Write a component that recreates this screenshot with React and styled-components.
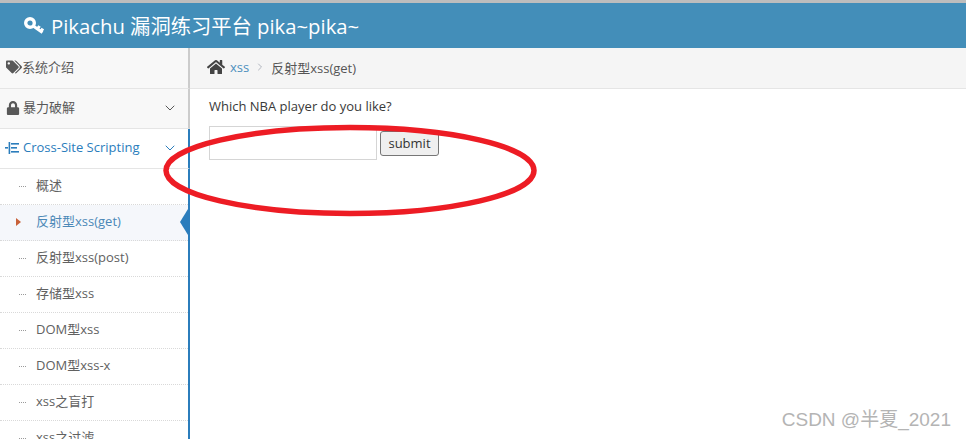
import React from "react";
import styled, { createGlobalStyle } from "styled-components";
import { FaTags, FaLock, FaHome } from "react-icons/fa";
import { ChevronDown, ChevronRight } from "lucide-react";

const Global = createGlobalStyle`
  html, body { margin: 0; padding: 0; background: #fff; overflow: hidden; }
  body { font-family: "Open Sans", "Noto Sans CJK SC", sans-serif; font-size: 13px; color: #393939; }
  * { box-sizing: border-box; }
`;

const Page = styled.div`
  position: relative;
  width: 966px;
  height: 439px;
  overflow: hidden;
  border-top: 3px solid #bdbdbd;
`;

const Navbar = styled.div`
  height: 45px;
  background: #438eb9;
  color: #fff;
  display: flex;
  align-items: center;
  padding: 0 0 1px 24px;
  gap: 7px;
  font-size: 20.3px;
`;

const Body = styled.div`
  display: flex;
  height: 391px;
`;

const Sidebar = styled.div`
  width: 190px;
  flex: none;
  position: relative;
  overflow: hidden;
  background: #fff;
`;

const MenuItem = styled.div`
  height: ${(p) => p.$h || 40}px;
  display: flex;
  align-items: center;
  padding: 0 10px 2px 6px;
  gap: ${(p) => p.$gap ?? 3}px;
  background: ${(p) => (p.$open ? "#fff" : "#f8f8f8")};
  color: ${(p) => (p.$open ? "#2b7dbc" : "#585858")};
  border-bottom: 1px solid #e5e5e5;
  border-right: 2px solid ${(p) => (p.$open ? "#2b7dbc" : "#cccccc")};
`;

const Label = styled.span`
  flex: 1;
  margin-bottom: 2px;
`;

const TreeIcon = styled.svg`
  margin-left: -1px;
  flex: none;
`;

const SubList = styled.div`
  position: relative;
  border-right: 2px solid #2b7dbc;
  &::before {
    content: "";
    position: absolute;
    left: 17px;
    top: 0;
    bottom: 0;
    border-left: 1px dotted #9dbdd6;
  }
`;

const SubItem = styled.div`
  position: relative;
  height: 36px;
  padding: 0 0 5px 36px;
  display: flex;
  align-items: center;
  color: ${(p) => (p.$active ? "#4b88b7" : "#616161")};
  background: ${(p) => (p.$active ? "#f5f7fb" : "#fff")};
  border-bottom: 1px dotted #d9d9d9;
  &::before {
    content: "";
    position: absolute;
    left: 19px;
    top: 17px;
    width: 7px;
    border-top: 1px dotted #9a9a9a;
    display: ${(p) => (p.$active ? "none" : "block")};
  }
`;

const ActiveMark = styled.i`
  position: absolute;
  left: 16px;
  top: 13px;
  border-left: 5px solid #c86139;
  border-top: 4px solid transparent;
  border-bottom: 4px solid transparent;
`;

const ActiveNotch = styled.i`
  position: absolute;
  right: 0;
  top: 4px;
  border-right: 8px solid #2b7dbc;
  border-top: 13px solid transparent;
  border-bottom: 13px solid transparent;
`;

const Main = styled.div`
  flex: 1;
  min-width: 0;
`;

const Breadcrumb = styled.div`
  height: 41px;
  background: #f5f5f5;
  border-bottom: 1px solid #e5e5e5;
  display: flex;
  align-items: center;
  padding: 0 0 2px 17px;
  color: #555;
`;

const Crumb = styled.span`
  color: #4c8fbd;
  margin-left: 5px;
`;

const Separator = styled(ChevronRight)`
  margin: 0 5px;
`;

const Content = styled.div`
  padding: 8px 0 0 19px;
`;

const Question = styled.p`
  margin: 0 0 11px;
  line-height: 18px;
  color: #393939;
`;

const Form = styled.form`
  display: flex;
  align-items: center;
  gap: 3px;
`;

const TextInput = styled.input`
  width: 168px;
  height: 34px;
  border: 1px solid #d5d5d5;
  background: #fff;
`;

const Submit = styled.button`
  width: 59px;
  height: 25px;
  padding: 0;
  border: 1px solid #767676;
  border-radius: 3px;
  background: #efefef;
  color: #333;
  font: 13px "Open Sans", sans-serif;
`;

const Ellipse = styled.svg`
  position: absolute;
  left: 160px;
  top: 115px;
`;

const Watermark = styled.div`
  position: absolute;
  right: 15px;
  bottom: 8px;
  font: 19px "Liberation Sans", "Noto Sans CJK SC", sans-serif;
  color: #b4b4b4;
`;

const KeyIcon = () => (
  <svg width="20" height="17" viewBox="0 0 20 17" fill="none" stroke="#fff">
    <circle cx="6" cy="6" r="4.3" strokeWidth="3.4" />
    <path d="M8.5 8.5 L18.5 15.5 M13.5 12 L15.5 9 M17 14.5 L18.8 11.5" strokeWidth="3" />
  </svg>
);

const subs = ["概述", "反射型xss(get)", "反射型xss(post)", "存储型xss", "DOM型xss", "DOM型xss-x", "xss之盲打", "xss之过滤"];

export default function App() {
  return (
    <Page>
      <Global />
      <Navbar>
        <KeyIcon />
        <span>Pikachu 漏洞练习平台 pika~pika~</span>
      </Navbar>
      <Body>
        <Sidebar>
          <MenuItem $h={41} $gap={0}>
            <FaTags size={16} />
            <Label>系统介绍</Label>
          </MenuItem>
          <MenuItem>
            <FaLock size={14} />
            <Label>暴力破解</Label>
            <ChevronDown size={16} strokeWidth={1.5} />
          </MenuItem>
          <MenuItem $open $gap={4}>
            <TreeIcon width="14" height="14" viewBox="0 0 14 14" fill="#2b7dbc">
              <rect x="0" y="6" width="3" height="1.6" />
              <rect x="3.6" y="1" width="1.6" height="12" />
              <rect x="6" y="2" width="8" height="1.6" />
              <rect x="6" y="6" width="6" height="1.6" />
              <rect x="6" y="10" width="8" height="1.6" />
            </TreeIcon>
            <Label>Cross-Site Scripting</Label>
            <ChevronDown size={16} strokeWidth={1.5} />
          </MenuItem>
          <SubList>
            {subs.map((s, i) => (
              <SubItem key={s} $active={i === 1}>
                {i === 1 && <ActiveMark />}
                {s}
                {i === 1 && <ActiveNotch />}
              </SubItem>
            ))}
          </SubList>
        </Sidebar>
        <Main>
          <Breadcrumb>
            <FaHome size={18} color="#444" />
            <Crumb>xss</Crumb>
            <Separator size={12} color="#b2b6bf" />
            <span>反射型xss(get)</span>
          </Breadcrumb>
          <Content>
            <Question>Which NBA player do you like?</Question>
            <Form>
              <TextInput />
              <Submit type="button">submit</Submit>
            </Form>
          </Content>
        </Main>
      </Body>
      <Ellipse width="380" height="100" viewBox="0 0 380 100">
        <ellipse cx="190" cy="52.5" rx="184" ry="43" fill="none" stroke="#ed1c24" strokeWidth="5.5" />
      </Ellipse>
      <Watermark>CSDN @半夏_2021</Watermark>
    </Page>
  );
}
